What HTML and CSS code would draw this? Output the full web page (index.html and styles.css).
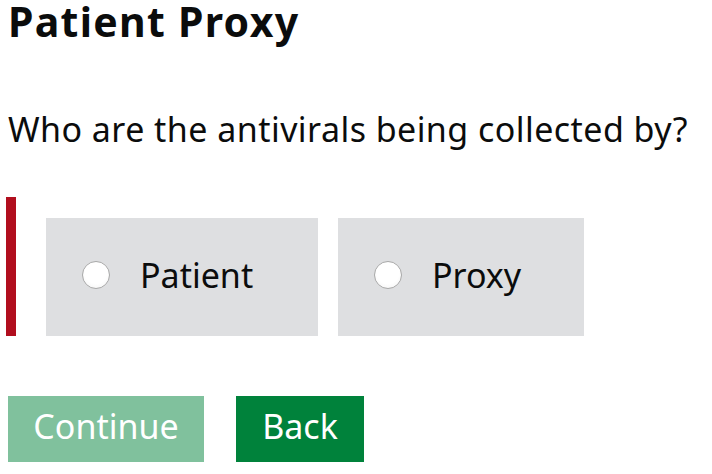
FILE: index.html
```html
<!DOCTYPE html>
<html lang="en">
<head>
<meta charset="utf-8">
<title>Patient Proxy</title>
<link rel="stylesheet" href="styles.css">
</head>
<body>
<main class="page">
  <h1 class="title">Patient Proxy</h1>
  <p class="question">Who are the antivirals being collected by?</p>
  <div class="field field-error">
    <label class="option option-patient">
      <span class="radio"></span>
      <span class="option-label">Patient</span>
    </label>
    <label class="option option-proxy">
      <span class="radio"></span>
      <span class="option-label">Proxy</span>
    </label>
  </div>
  <div class="actions">
    <button class="btn btn-continue btn-disabled" type="button">Continue</button>
    <button class="btn btn-back" type="button">Back</button>
  </div>
</main>
</body>
</html>
```

FILE: styles.css
```css
* { box-sizing: border-box; }
html, body { margin: 0; padding: 0; background: #fff; }
body {
  font-family: "Noto Sans", "Open Sans", sans-serif;
  color: #0b0c0c;
}
.page {
  padding: 0 8px;
}
.title {
  margin: 0;
  font-size: 41px;
  font-weight: 700;
  line-height: 43px;
  letter-spacing: 1.3px;
}
.question {
  margin: 66px 0 0;
  font-size: 34px;
  line-height: 40px;
  letter-spacing: 0.45px;
}
.field {
  display: flex;
  gap: 20px;
  margin: 48px 0 0 -2px;
  padding: 21px 0 0 30px;
  border-left: 10px solid #b10e1e;
}
.option {
  display: flex;
  align-items: center;
  height: 118px;
  padding-bottom: 5px;
  background: #dedfe1;
}
.option-patient { width: 272px; padding-left: 36px; }
.option-proxy { width: 246px; padding-left: 36px; }
.radio {
  width: 28px;
  height: 28px;
  border-radius: 50%;
  border: 1px solid #a9a9a9;
  background: radial-gradient(circle at 50% 40%, #fff 55%, #f1f1f1 100%);
  flex: none;
}
.option-label {
  margin-left: 30px;
  font-size: 34px;
  line-height: 40px;
}
.actions {
  display: flex;
  gap: 32px;
  margin-top: 60px;
}
.btn {
  height: 66px;
  padding: 0 0 6px;
  border: 0;
  background: #00823b;
  color: #fff;
  font-family: inherit;
  font-size: 34px;
  line-height: 40px;
  text-align: center;
  box-shadow: 0 4px 0 #003618;
}
.btn-continue { width: 196px; }
.btn-back { width: 128px; }
.btn-disabled {
  background: #80c19d;
  box-shadow: 0 4px 0 #889b8e;
}
```
